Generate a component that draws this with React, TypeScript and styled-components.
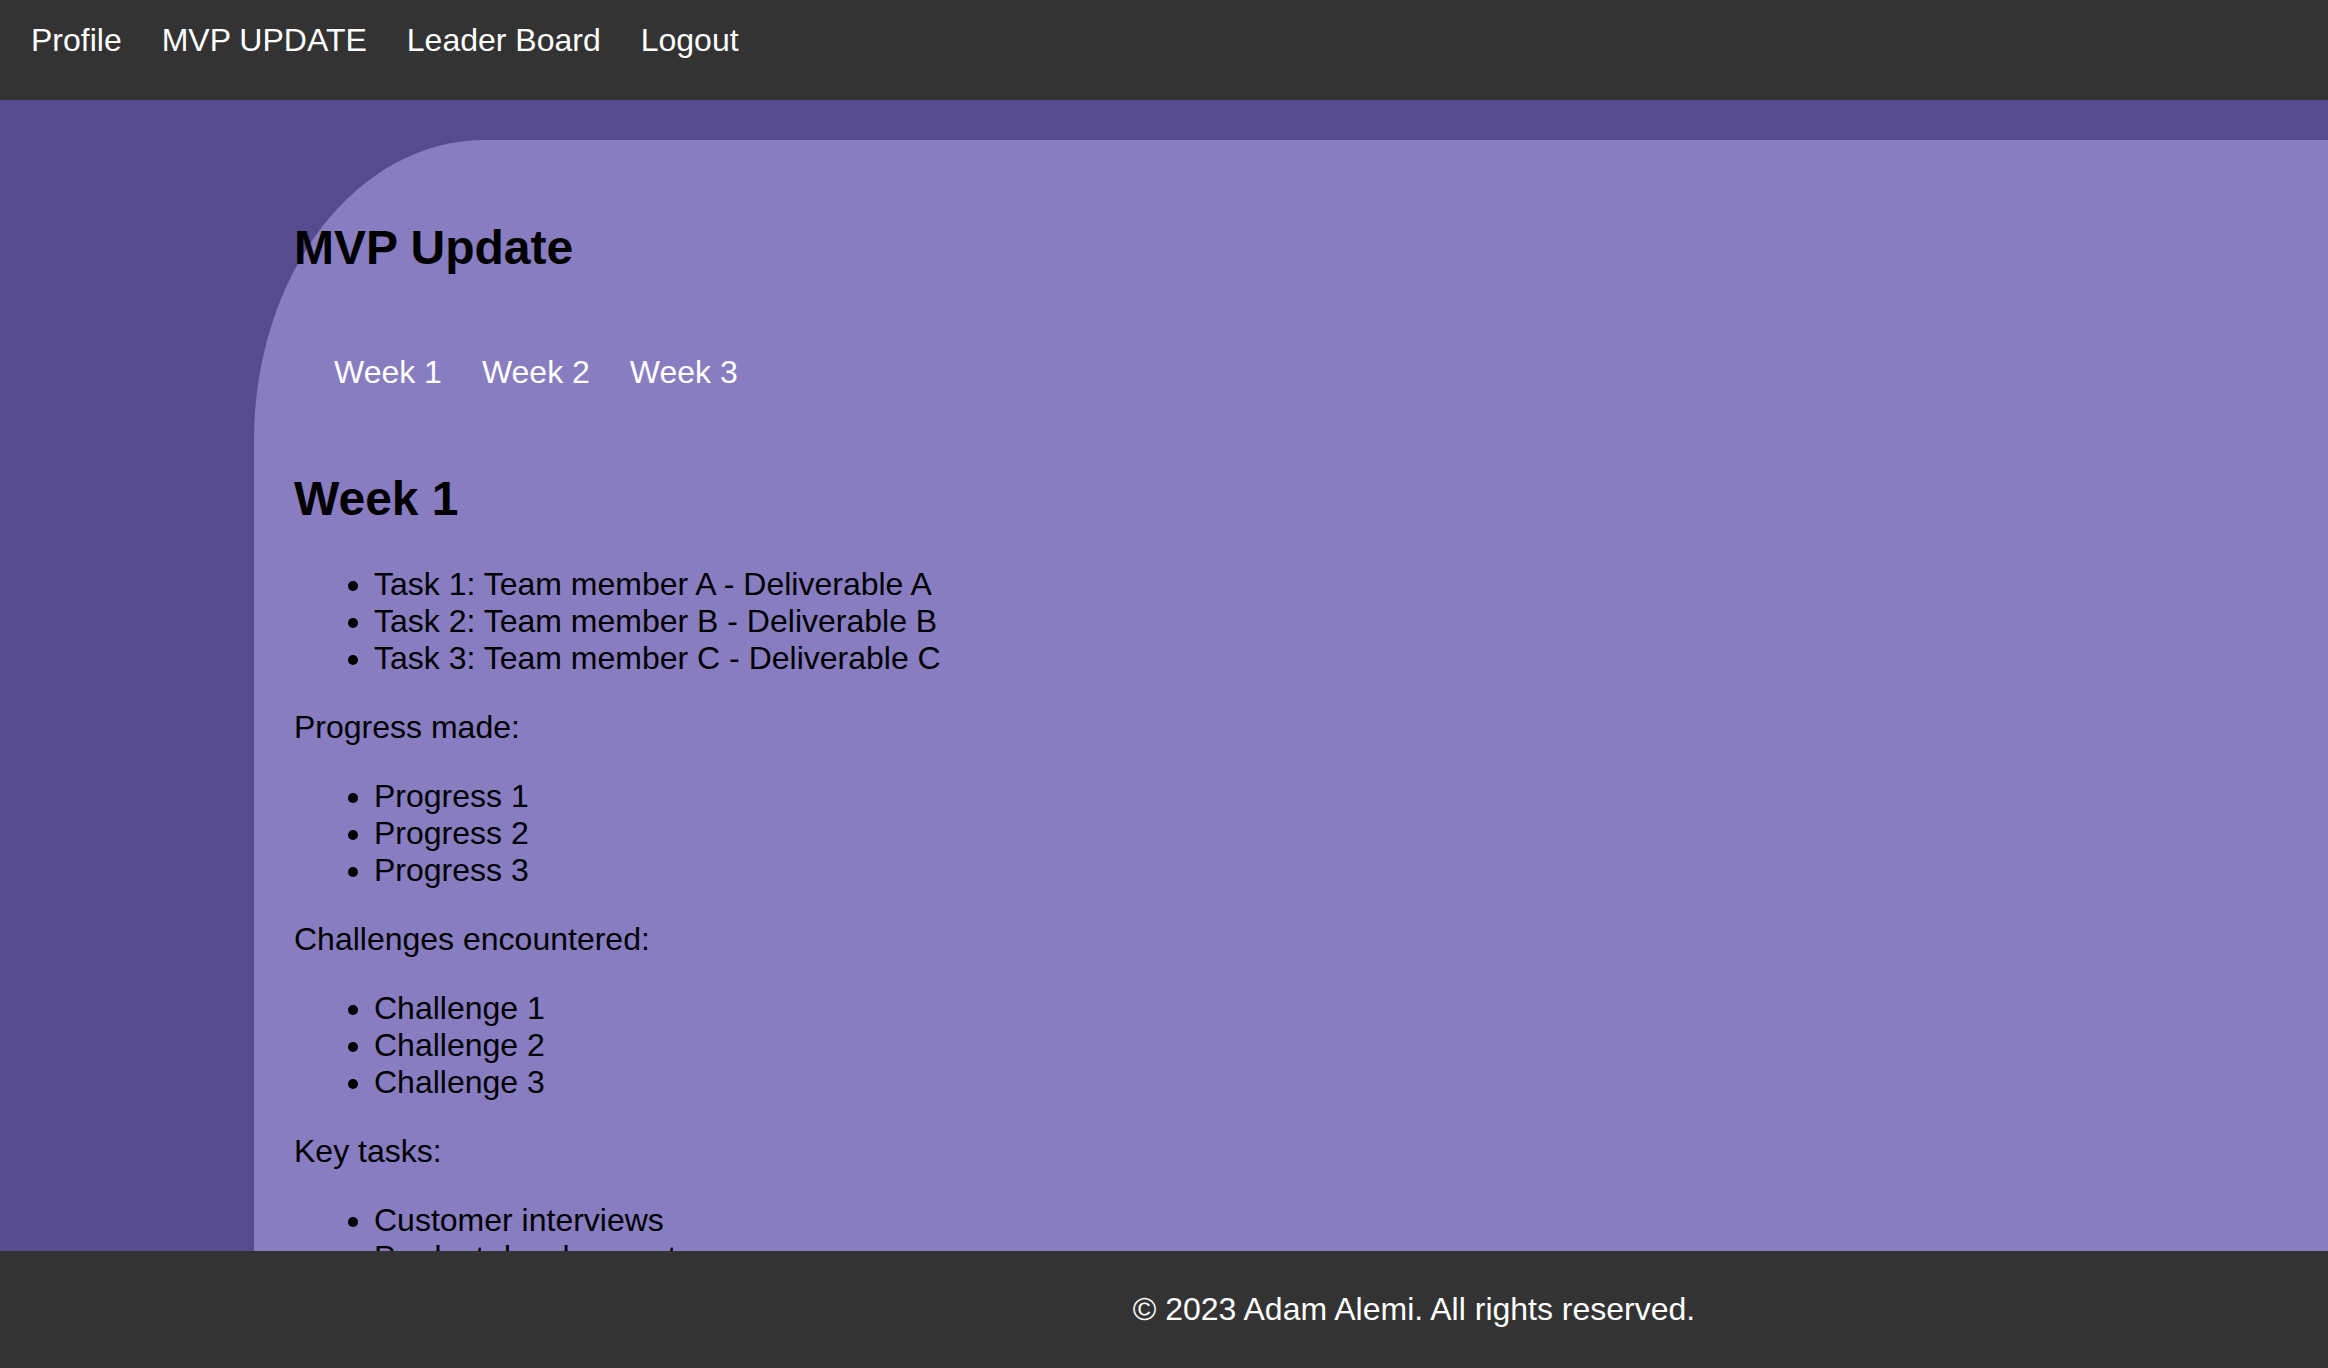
import React from "react";
import styled, { createGlobalStyle } from "styled-components";

const GlobalStyle = createGlobalStyle`
  html, body {
    margin: 0;
    padding: 0;
    background: #574b90;
  }
  body {
    font-family: "Liberation Sans", Arial, Helvetica, sans-serif;
    font-size: 32px;
    line-height: normal;
    color: #000;
  }
`;

const Header = styled.header`
  box-sizing: border-box;
  height: 100px;
  background: #333333;
  padding: 22px 31px 0;
`;

const Nav = styled.nav`
  display: flex;
  gap: 40px;
`;

const NavLink = styled.a`
  color: #ffffff;
  text-decoration: none;
  font-size: 32px;
  cursor: pointer;
`;

const Main = styled.main`
  background: #574b90;
  padding: 40px 0 0 254px;
`;

const Panel = styled.section`
  background: #877dc0;
  border-top-left-radius: 230px 300px;
  padding: 40px 40px 160px;
`;

const Title = styled.h1`
  font-size: 48px;
  font-weight: bold;
  margin: 39.8px 0;
`;

const Tabs = styled.div`
  display: flex;
  gap: 40px;
  padding: 39px 0 41px 40px;
`;

const Tab = styled.a`
  color: #ffffff;
  text-decoration: none;
  font-size: 32px;
  cursor: pointer;
`;

const WeekTitle = styled.h2`
  font-size: 48px;
  font-weight: bold;
  margin: 39.8px 0;
`;

const List = styled.ul`
  margin: 32px 0;
  padding-left: 80px;
  list-style: disc;
`;

const Item = styled.li``;

const Para = styled.p`
  margin: 32px 0;
`;

const Footer = styled.footer`
  position: fixed;
  left: 0;
  right: 0;
  bottom: 0;
  background: #333333;
  color: #ffffff;
  text-align: center;
  padding: 40px 0 40px 500px;
  font-size: 32px;
`;

const tasks = [
  "Task 1: Team member A - Deliverable A",
  "Task 2: Team member B - Deliverable B",
  "Task 3: Team member C - Deliverable C",
];
const progress = ["Progress 1", "Progress 2", "Progress 3"];
const challenges = ["Challenge 1", "Challenge 2", "Challenge 3"];
const keyTasks = ["Customer interviews", "Product development", "Marketing strategy"];

export default function App() {
  return (
    <>
      <GlobalStyle />
      <Header>
        <Nav>
          <NavLink>Profile</NavLink>
          <NavLink>MVP UPDATE</NavLink>
          <NavLink>Leader Board</NavLink>
          <NavLink>Logout</NavLink>
        </Nav>
      </Header>
      <Main>
        <Panel>
          <Title>MVP Update</Title>
          <Tabs>
            <Tab>Week 1</Tab>
            <Tab>Week 2</Tab>
            <Tab>Week 3</Tab>
          </Tabs>
          <WeekTitle>Week 1</WeekTitle>
          <List>
            {tasks.map((t) => (
              <Item key={t}>{t}</Item>
            ))}
          </List>
          <Para>Progress made:</Para>
          <List>
            {progress.map((t) => (
              <Item key={t}>{t}</Item>
            ))}
          </List>
          <Para>Challenges encountered:</Para>
          <List>
            {challenges.map((t) => (
              <Item key={t}>{t}</Item>
            ))}
          </List>
          <Para>Key tasks:</Para>
          <List>
            {keyTasks.map((t) => (
              <Item key={t}>{t}</Item>
            ))}
          </List>
        </Panel>
      </Main>
      <Footer>© 2023 Adam Alemi. All rights reserved.</Footer>
    </>
  );
}
